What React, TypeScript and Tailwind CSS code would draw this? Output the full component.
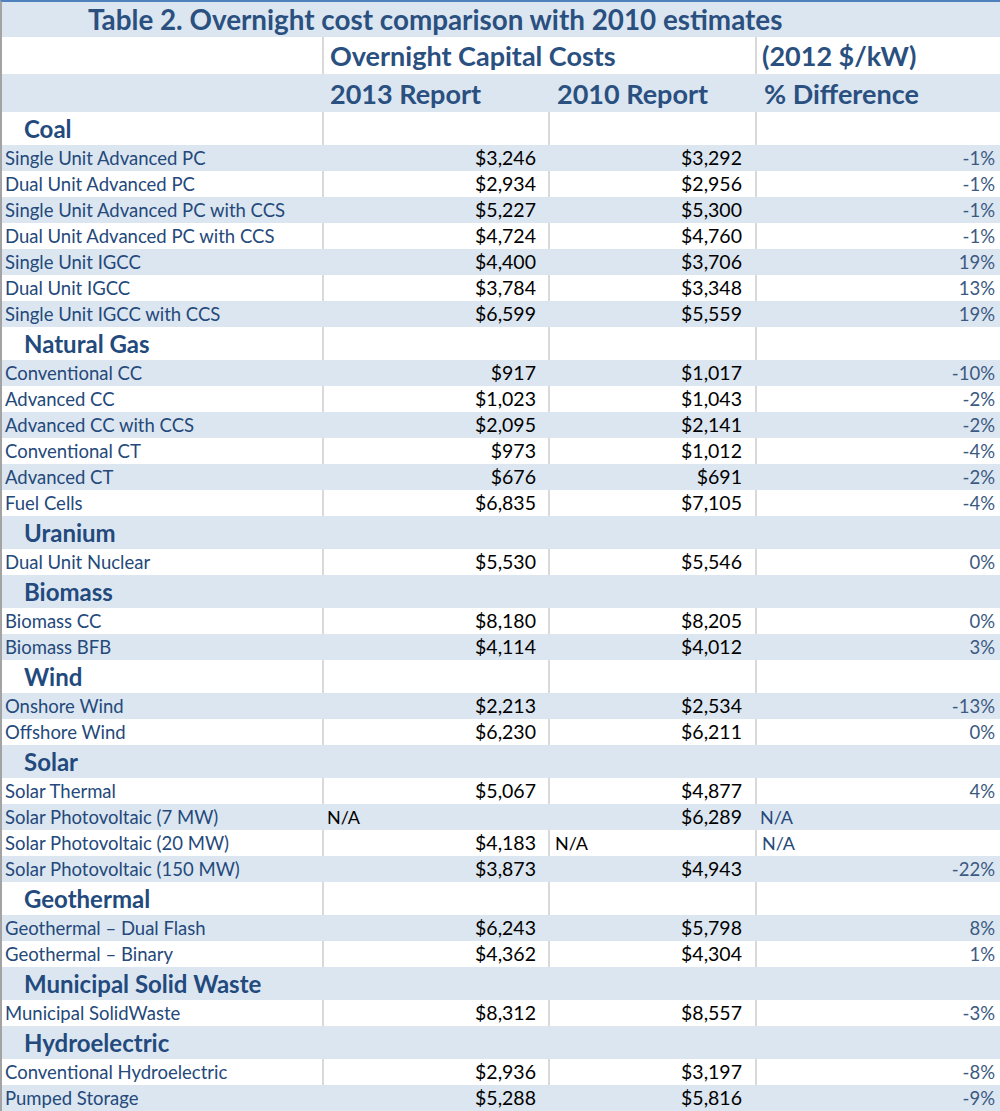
type Item = { label: string; a: string; b: string; diff: string };
type Group = { name: string; items: Item[] };

const GROUPS: Group[] = [
  {
    name: "Coal",
    items: [
      { label: "Single Unit Advanced PC", a: "$3,246", b: "$3,292", diff: "-1%" },
      { label: "Dual Unit Advanced PC", a: "$2,934", b: "$2,956", diff: "-1%" },
      { label: "Single Unit Advanced PC with CCS", a: "$5,227", b: "$5,300", diff: "-1%" },
      { label: "Dual Unit Advanced PC with CCS", a: "$4,724", b: "$4,760", diff: "-1%" },
      { label: "Single Unit IGCC", a: "$4,400", b: "$3,706", diff: "19%" },
      { label: "Dual Unit IGCC", a: "$3,784", b: "$3,348", diff: "13%" },
      { label: "Single Unit IGCC with CCS", a: "$6,599", b: "$5,559", diff: "19%" },
    ],
  },
  {
    name: "Natural Gas",
    items: [
      { label: "Conventional CC", a: "$917", b: "$1,017", diff: "-10%" },
      { label: "Advanced CC", a: "$1,023", b: "$1,043", diff: "-2%" },
      { label: "Advanced CC with CCS", a: "$2,095", b: "$2,141", diff: "-2%" },
      { label: "Conventional CT", a: "$973", b: "$1,012", diff: "-4%" },
      { label: "Advanced CT", a: "$676", b: "$691", diff: "-2%" },
      { label: "Fuel Cells", a: "$6,835", b: "$7,105", diff: "-4%" },
    ],
  },
  {
    name: "Uranium",
    items: [{ label: "Dual Unit Nuclear", a: "$5,530", b: "$5,546", diff: "0%" }],
  },
  {
    name: "Biomass",
    items: [
      { label: "Biomass CC", a: "$8,180", b: "$8,205", diff: "0%" },
      { label: "Biomass BFB", a: "$4,114", b: "$4,012", diff: "3%" },
    ],
  },
  {
    name: "Wind",
    items: [
      { label: "Onshore Wind", a: "$2,213", b: "$2,534", diff: "-13%" },
      { label: "Offshore Wind", a: "$6,230", b: "$6,211", diff: "0%" },
    ],
  },
  {
    name: "Solar",
    items: [
      { label: "Solar Thermal", a: "$5,067", b: "$4,877", diff: "4%" },
      { label: "Solar Photovoltaic (7 MW)", a: "N/A", b: "$6,289", diff: "N/A" },
      { label: "Solar Photovoltaic (20 MW)", a: "$4,183", b: "N/A", diff: "N/A" },
      { label: "Solar Photovoltaic (150 MW)", a: "$3,873", b: "$4,943", diff: "-22%" },
    ],
  },
  {
    name: "Geothermal",
    items: [
      { label: "Geothermal – Dual Flash", a: "$6,243", b: "$5,798", diff: "8%" },
      { label: "Geothermal – Binary", a: "$4,362", b: "$4,304", diff: "1%" },
    ],
  },
  {
    name: "Municipal Solid Waste",
    items: [{ label: "Municipal SolidWaste", a: "$8,312", b: "$8,557", diff: "-3%" }],
  },
  {
    name: "Hydroelectric",
    items: [
      { label: "Conventional Hydroelectric", a: "$2,936", b: "$3,197", diff: "-8%" },
      { label: "Pumped Storage", a: "$5,288", b: "$5,816", diff: "-9%" },
    ],
  },
];

type Row = { kind: "group"; name: string } | { kind: "item"; item: Item };

const rows: Row[] = [];
GROUPS.forEach((g) => {
  rows.push({ kind: "group", name: g.name });
  g.items.forEach((item) => rows.push({ kind: "item", item }));
});

// gridline shown only on unshaded rows, like the sheet
const line = "border-l-2 border-[#d9d9d9]";

const Cells = ({ shaded, h, children }: { shaded: boolean; h: string; children: React.ReactNode[] }) => (
  <div className={`flex ${h} ${shaded ? "bg-[#dce6f1]" : "bg-white"}`}>
    <div className="w-[320px] flex items-center overflow-hidden whitespace-nowrap">{children[0]}</div>
    <div className={`w-[226px] flex items-center ${shaded ? "" : line}`}>{children[1]}</div>
    <div className={`w-[207px] flex items-center ${shaded ? "" : line}`}>{children[2]}</div>
    <div className={`flex-1 flex items-center ${shaded ? "" : line}`}>{children[3]}</div>
  </div>
);

const NumCell = ({ v, pr }: { v: string; pr: string }) =>
  v === "N/A" ? (
    <span className="pl-[5px] w-full text-black text-[18px]">N/A</span>
  ) : (
    <span className={`w-full text-right text-black text-[19.5px] ${pr}`}>{v}</span>
  );

export default function App() {
  return (
    <div
      className="w-[1000px] bg-white border-t-2 border-t-[#4f81bd] border-b-2 border-b-[#4f81bd] border-l-2 border-l-[#a3a3a3] text-[18.5px] leading-none text-[#24497a]"
      style={{ fontFamily: "Lato, 'Open Sans', sans-serif" }}
    >
      {/* title */}
      <div className="h-[35px] bg-[#dce6f1] flex items-center pl-[86px] text-[27.8px] font-bold text-[#2a5080]">
        Table 2. Overnight cost comparison with 2010 estimates
      </div>

      {/* header rows */}
      <div className="flex h-[37px] bg-white text-[27px] font-bold text-[#2a5080]">
        <div className="w-[320px]" />
        <div className={`w-[433px] flex items-center pl-[6px] ${line}`}>Overnight Capital Costs</div>
        <div className={`flex-1 flex items-center pl-[5px] ${line}`}>(2012 $/kW)</div>
      </div>
      <div className="flex h-[38px] bg-[#dce6f1] text-[27px] font-bold text-[#2a5080]">
        <div className="w-[320px]" />
        <div className="w-[228px] flex items-center pl-[8px]">2013 Report</div>
        <div className="w-[207px] flex items-center pl-[7px]">2010 Report</div>
        <div className="flex-1 flex items-center pl-[7px]">% Difference</div>
      </div>

      {rows.map((r, i) => {
        const shaded = i % 2 === 1;
        if (r.kind === "group") {
          return (
            <Cells key={i} shaded={shaded} h="h-[33px]">
              {[
                <span className="pl-[22px] text-[24px] font-bold text-[#234a7d]">{r.name}</span>,
                null,
                null,
                null,
              ]}
            </Cells>
          );
        }
        const it = r.item;
        return (
          <Cells key={i} shaded={shaded} h="h-[26px]">
            {[
              <span className="pl-[3px] text-[#24497a]">{it.label}</span>,
              <NumCell v={it.a} pr="pr-[12px]" />,
              <NumCell v={it.b} pr="pr-[13px]" />,
              it.diff === "N/A" ? (
                <span className="pl-[5px] text-[18px] text-[#24497a]">N/A</span>
              ) : (
                <span className="w-full text-right pr-[5px] text-[18.5px] text-[#3b5a82]">{it.diff}</span>
              ),
            ]}
          </Cells>
        );
      })}
    </div>
  );
}
